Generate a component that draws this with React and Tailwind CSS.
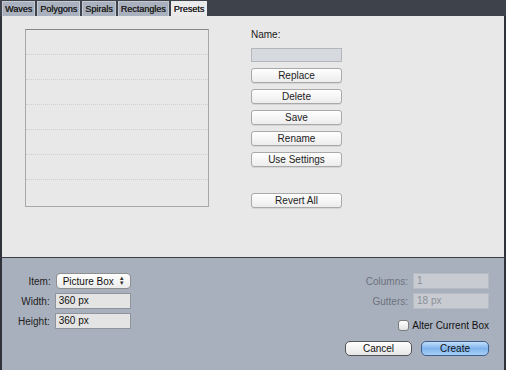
import React from 'react';

const tabs = ['Waves', 'Polygons', 'Spirals', 'Rectangles', 'Presets'];

const PresetButton = ({ children, className = '' }) => (
    <button className={`w-[91px] h-[15px] rounded-[3px] border border-[#a9a9a9] bg-gradient-to-b from-[#ffffff] to-[#ececec] text-[10px] leading-[13px] text-[#222] shadow-[0_1px_0_rgba(0,0,0,0.08)] ${className}`}>
        {children}
    </button>
);

const Field = ({ label, value, disabled }) => (
    <div className="flex items-center gap-[5px]">
        <span className={`text-[10px] text-right ${disabled ? 'text-[#6d727c]' : 'text-[#222]'}`}>{label}</span>
        <div className={`w-[76px] h-[16px] border px-[3px] text-[10px] leading-[14px] ${disabled ? 'border-[#b7bbc2] bg-[#c8ccd2] text-[#8a8f98]' : 'border-[#8f949c] bg-[#e4e4e4] text-[#111]'}`}>
            {value}
        </div>
    </div>
);

export default function App() {
    return (
        <div className="w-[506px] h-[370px] bg-[#2f3238] flex flex-col font-['Liberation_Sans',Arial,sans-serif] overflow-hidden">
            {/* tab strip */}
            <div className="h-[16px] bg-[#3d424b] flex items-end pl-[2px] gap-[2px]">
                {tabs.map((t) => (
                    <div
                        key={t}
                        className={`h-[15px] px-[2px] text-[9px] leading-[14px] font-normal [text-shadow:0.3px_0_0_#222] border-x border-t ${t === 'Presets' ? 'bg-[#ebebeb] border-[#ebebeb] text-[#222]' : 'bg-[#a9b1bf] border-[#c4c9d2] text-[#222]'}`}
                    >
                        {t}
                    </div>
                ))}
            </div>

            {/* main panel */}
            <div className="ml-[2px] mr-[2px] h-[241px] bg-[#e8e8e8] flex pt-[13px] pl-[23px]">
                <div className="w-[184px] h-[178px] border border-[#a8a8a8] border-t-[#888] flex flex-col">
                    {[0, 1, 2, 3, 4, 5, 6].map((i) => (
                        <div key={i} className={`h-[25px] ${i < 6 ? 'border-b border-dotted border-[#cfcfcf]' : ''}`} />
                    ))}
                </div>
                <div className="ml-[42px] flex flex-col">
                    <span className="text-[10px] text-[#222] leading-[12px]">Name:</span>
                    <div className="mt-[7px] w-[91px] h-[14px] bg-[#d6d9de] border border-[#b3b6bb]" />
                    <div className="mt-[6px] flex flex-col gap-[6px]">
                        <PresetButton>Replace</PresetButton>
                        <PresetButton>Delete</PresetButton>
                        <PresetButton>Save</PresetButton>
                        <PresetButton>Rename</PresetButton>
                        <PresetButton>Use Settings</PresetButton>
                        <PresetButton className="mt-[20px]">Revert All</PresetButton>
                    </div>
                </div>
            </div>

            <div className="h-[1px] bg-[#3a3d44]" />

            {/* bottom panel */}
            <div className="ml-[2px] mr-[2px] flex-1 bg-[#a9b0bd] pt-[15px]">
                <div className="flex justify-between pl-[16px] pr-[15px]">
                    <div className="flex flex-col gap-[4px] items-end">
                        <div className="flex items-center gap-[5px]">
                            <span className="text-[10px] text-[#222]">Item:</span>
                            <div className="w-[75px] h-[16px] rounded-[4px] border border-[#8e8e8e] bg-gradient-to-b from-white to-[#ececec] flex items-center justify-between pl-[6px] pr-[5px] text-[10px] text-[#111]">
                                <span>Picture Box</span>
                                <span className="text-[6px] leading-[5px] flex flex-col text-[#333]">
                                    <span>▲</span>
                                    <span>▼</span>
                                </span>
                            </div>
                        </div>
                        <Field label="Width:" value="360 px" />
                        <Field label="Height:" value="360 px" />
                    </div>
                    <div className="flex flex-col gap-[4px] items-end">
                        <Field label="Columns:" value="1" disabled />
                        <Field label="Gutters:" value="18 px" disabled />
                        <div className="flex items-center gap-[3px] mt-[5px]">
                            <div className="w-[11px] h-[11px] rounded-[3px] border border-[#7c7c7c] bg-gradient-to-b from-white to-[#e2e2e2]" />
                            <span className="text-[10px] text-[#111]">Alter Current Box</span>
                        </div>
                    </div>
                </div>
                <div className="flex justify-end gap-[9px] pr-[15px] mt-[8px]">
                    <button className="w-[67px] h-[15px] rounded-[5px] border border-[#555] bg-gradient-to-b from-white to-[#e6e6e6] text-[10px] leading-[13px] text-[#111]">Cancel</button>
                    <button className="w-[68px] h-[15px] rounded-[5px] border border-[#3d5f8f] bg-gradient-to-b from-[#c4defa] via-[#7fb3ec] to-[#a8d0f7] text-[10px] leading-[13px] text-[#111]">Create</button>
                </div>
            </div>
        </div>
    );
}
